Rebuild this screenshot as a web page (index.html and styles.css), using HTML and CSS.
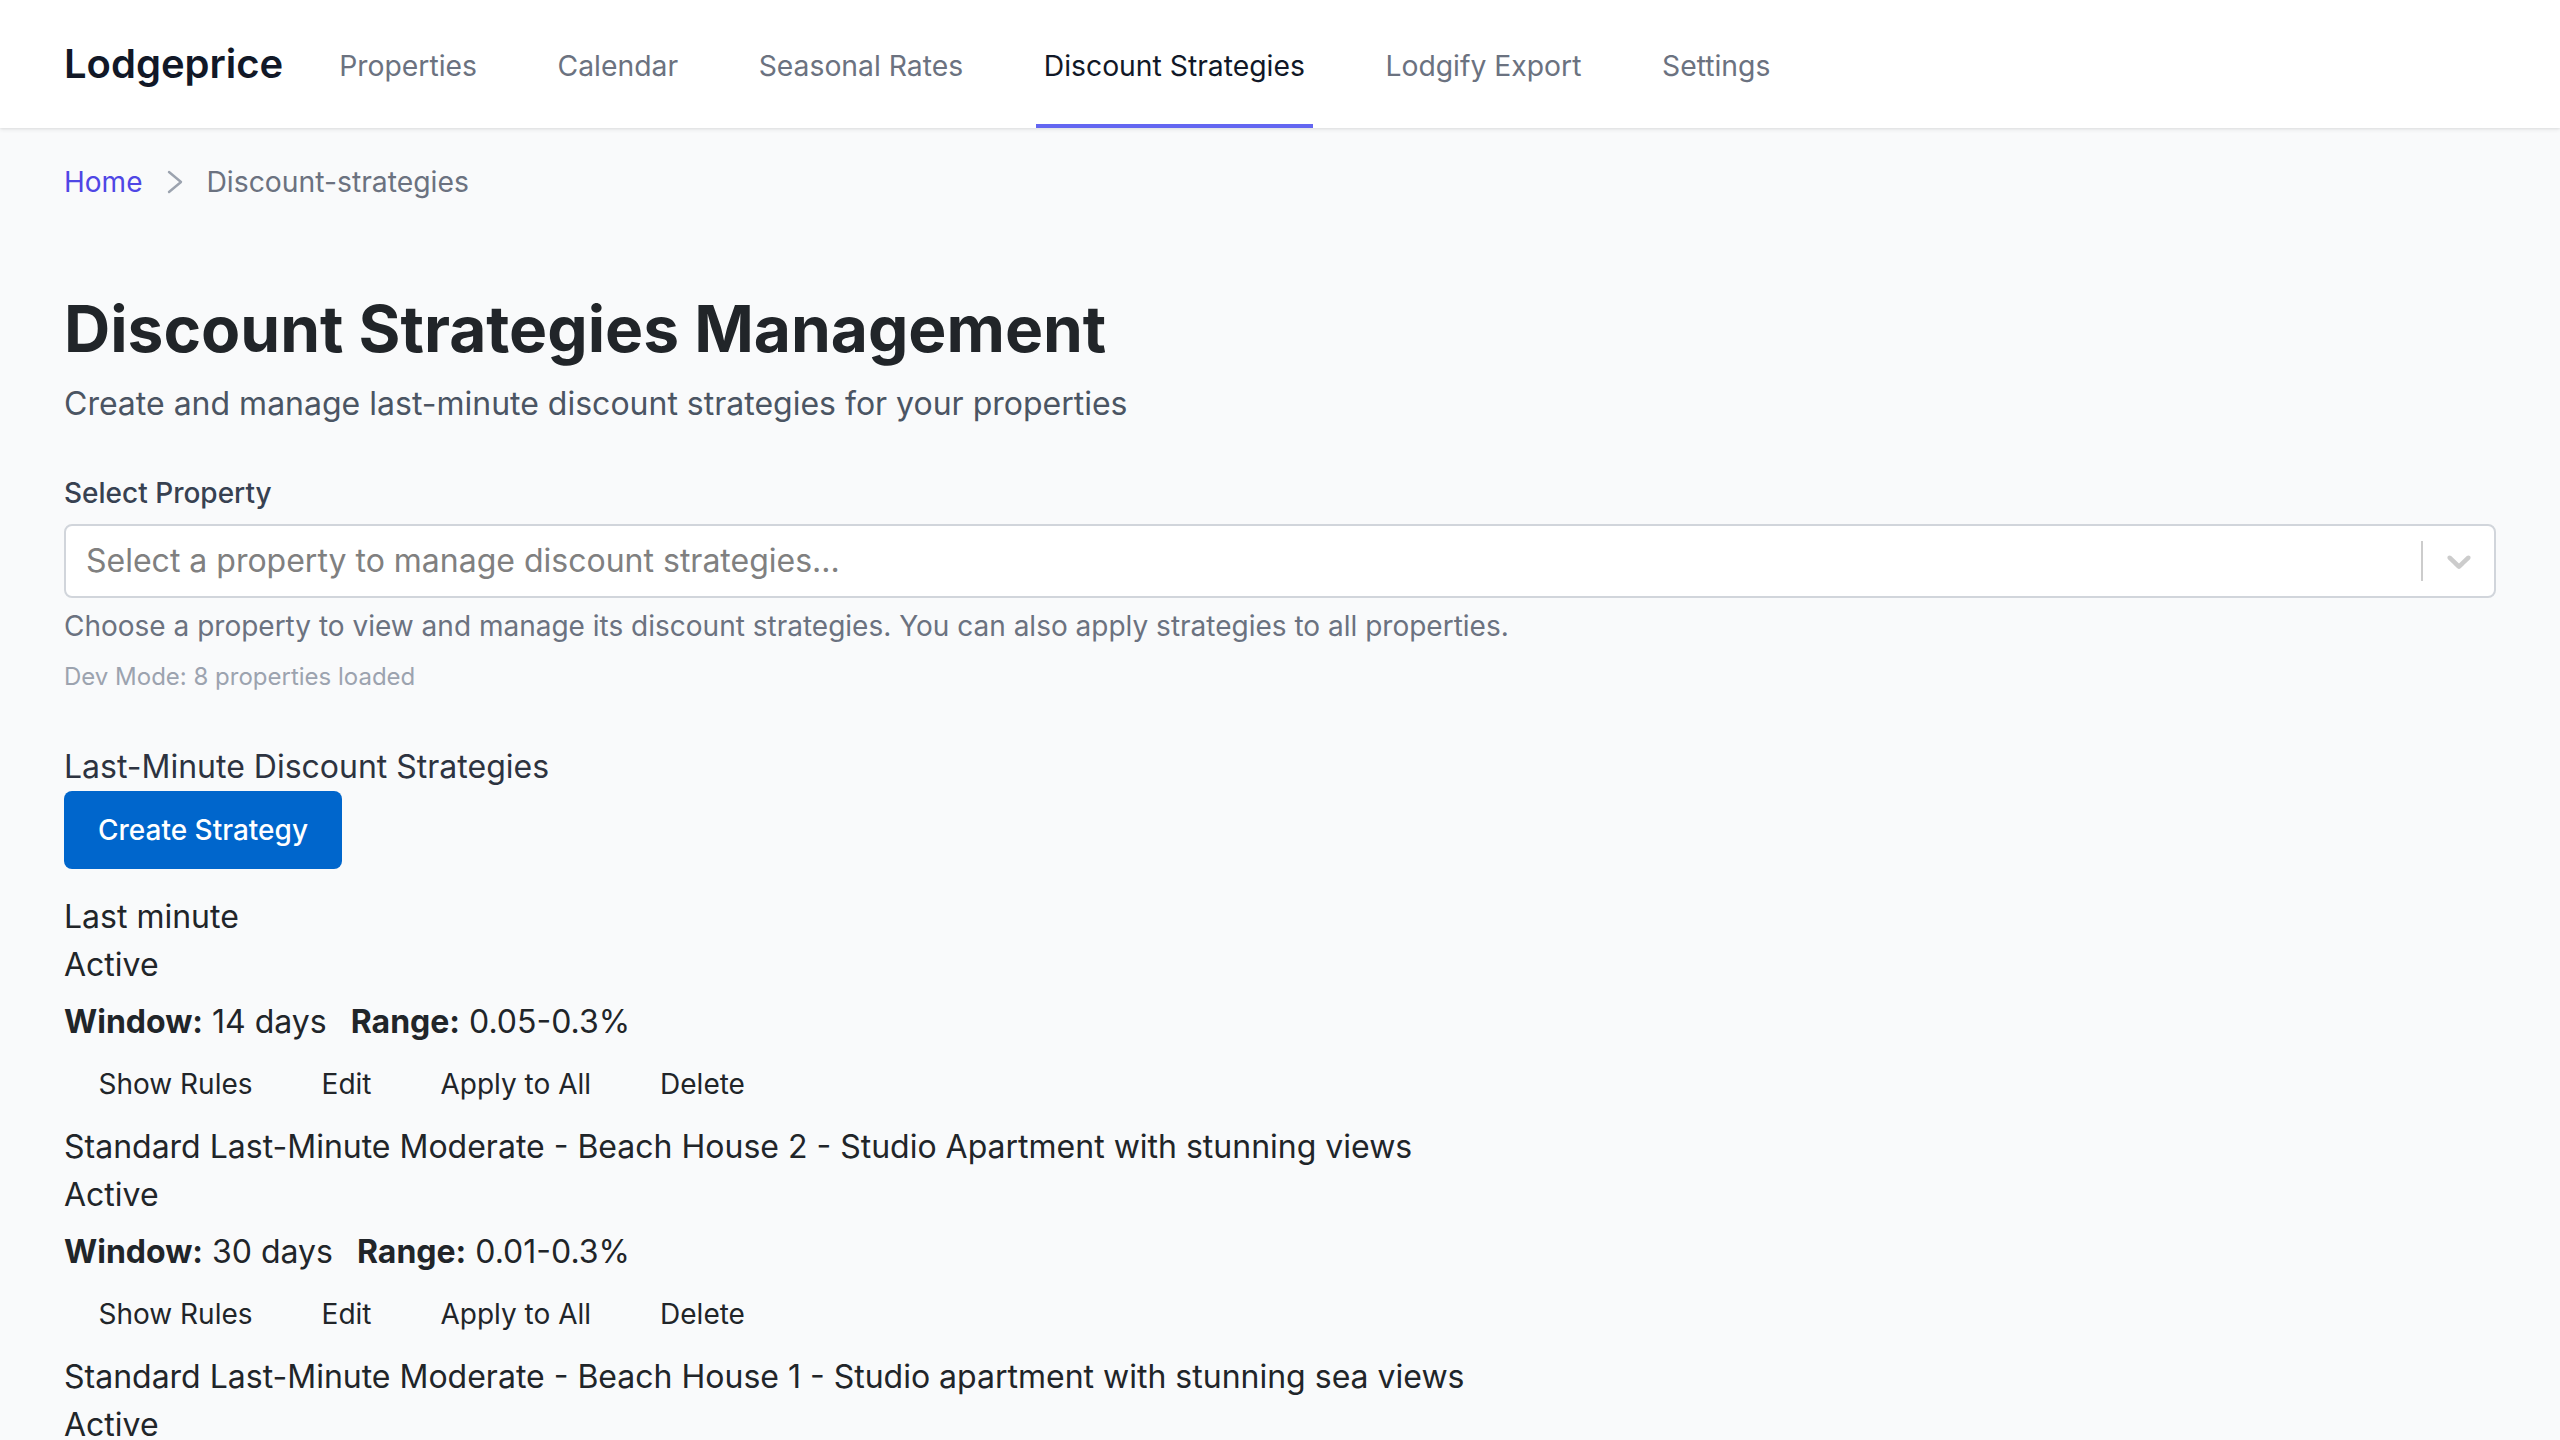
FILE: index.html
```html
<!DOCTYPE html>
<html lang="en">
<head>
<meta charset="utf-8">
<title>Lodgeprice - Discount Strategies</title>
<link rel="stylesheet" href="styles.css">
</head>
<body>
<header class="topbar">
  <div class="brand">Lodgeprice</div>
  <nav class="nav">
    <a class="nav-link" href="#">Properties</a>
    <a class="nav-link" href="#">Calendar</a>
    <a class="nav-link" href="#">Seasonal Rates</a>
    <a class="nav-link active" href="#">Discount Strategies</a>
    <a class="nav-link" href="#">Lodgify Export</a>
    <a class="nav-link" href="#">Settings</a>
  </nav>
</header>

<main class="main">
  <div class="breadcrumb">
    <a class="crumb-home" href="#">Home</a>
    <svg class="crumb-sep" width="18" height="24" viewBox="0 0 18 24" aria-hidden="true"><polyline points="3,2 15,12 3,22" fill="none" stroke="#9ca3af" stroke-width="2.4" stroke-linecap="round" stroke-linejoin="round"/></svg>
    <span class="crumb-current">Discount-strategies</span>
  </div>

  <h1 class="page-title">Discount Strategies Management</h1>
  <p class="page-sub">Create and manage last-minute discount strategies for your properties</p>

  <label class="field-label">Select Property</label>
  <div class="select">
    <div class="select-value">Select a property to manage discount strategies...</div>
    <span class="select-sep"></span>
    <div class="select-indicator">
      <svg width="40" height="40" viewBox="0 0 20 20" aria-hidden="true"><path fill="#cccccc" d="M4.516 7.548c0.436-0.446 1.043-0.481 1.576 0l3.908 3.747 3.908-3.747c0.533-0.481 1.141-0.446 1.574 0 0.436 0.445 0.408 1.197 0 1.615-0.406 0.418-4.695 4.502-4.695 4.502-0.217 0.223-0.502 0.335-0.787 0.335s-0.57-0.112-0.789-0.335c0 0-4.287-4.084-4.695-4.502s-0.436-1.170 0-1.615z"/></svg>
    </div>
  </div>
  <p class="help">Choose a property to view and manage its discount strategies. You can also apply strategies to all properties.</p>
  <p class="dev">Dev Mode: 8 properties loaded</p>

  <h2 class="section-title">Last-Minute Discount Strategies</h2>
  <button class="btn-primary" type="button">Create Strategy</button>

  <div class="strategies">
    <div class="strategy">
      <div class="s-name">Last minute</div>
      <div class="s-status">Active</div>
      <div class="s-meta"><span><strong>Window:</strong> 14 days</span><span><strong>Range:</strong> 0.05-0.3%</span></div>
      <div class="s-actions">
        <button class="btn-plain" type="button">Show Rules</button>
        <button class="btn-plain" type="button">Edit</button>
        <button class="btn-plain" type="button">Apply to All</button>
        <button class="btn-plain" type="button">Delete</button>
      </div>
    </div>
    <div class="strategy">
      <div class="s-name">Standard Last-Minute Moderate - Beach House 2 - Studio Apartment with stunning views</div>
      <div class="s-status">Active</div>
      <div class="s-meta"><span><strong>Window:</strong> 30 days</span><span><strong>Range:</strong> 0.01-0.3%</span></div>
      <div class="s-actions">
        <button class="btn-plain" type="button">Show Rules</button>
        <button class="btn-plain" type="button">Edit</button>
        <button class="btn-plain" type="button">Apply to All</button>
        <button class="btn-plain" type="button">Delete</button>
      </div>
    </div>
    <div class="strategy">
      <div class="s-name">Standard Last-Minute Moderate - Beach House 1 - Studio apartment with stunning sea views</div>
      <div class="s-status">Active</div>
      <div class="s-meta"><span><strong>Window:</strong> 30 days</span><span><strong>Range:</strong> 0.01-0.3%</span></div>
      <div class="s-actions">
        <button class="btn-plain" type="button">Show Rules</button>
        <button class="btn-plain" type="button">Edit</button>
        <button class="btn-plain" type="button">Apply to All</button>
        <button class="btn-plain" type="button">Delete</button>
      </div>
    </div>
  </div>
</main>
</body>
</html>
```
FILE: styles.css
```css
* { box-sizing: border-box; }
html, body { margin: 0; padding: 0; }
body {
  background: #f9fafb;
  font-family: Inter, "Noto Sans", "Liberation Sans", sans-serif;
  color: #212529;
}

/* ---------- top bar ---------- */
.topbar {
  height: 128px;
  background: #ffffff;
  display: flex;
  align-items: center;
  padding: 0 64px;
  box-shadow: 0 2px 4px rgba(0, 0, 0, 0.07), 0 1px 2px rgba(0, 0, 0, 0.05);
  position: relative;
  z-index: 1;
}
.brand {
  font-size: 40px;
  font-weight: 600;
  color: #111827;
  line-height: 56px;
}
.nav {
  display: flex;
  align-self: stretch;
  margin-left: 48px;
  gap: 64.6px;
}
.nav-link {
  display: flex;
  align-items: center;
  padding: 7px 8px 0;
  border-bottom: 4px solid transparent;
  font-size: 28.3px;
  color: #6b7280;
  text-decoration: none;
}
.nav-link.active {
  color: #111827;
  border-bottom-color: #6366f1;
}

/* ---------- main ---------- */
.main {
  padding: 34px 64px 64px;
}
.breadcrumb {
  display: flex;
  align-items: center;
  height: 40px;
  font-size: 28px;
}
.crumb-home {
  color: #4f46e5;
  text-decoration: none;
}
.crumb-sep {
  margin-left: 24px;
  display: block;
}
.crumb-current {
  margin-left: 22px;
  font-size: 28.3px;
  color: #6b7280;
}

.page-title {
  margin: 87px 0 0;
  font-size: 64px;
  line-height: 80px;
  font-weight: 700;
  color: #212529;
}
.page-sub {
  margin: 10.5px 0 0;
  font-size: 32px;
  line-height: 48px;
  color: #4b5563;
}

.field-label {
  display: block;
  margin-top: 45.5px;
  font-size: 28px;
  line-height: 40px;
  font-weight: 500;
  color: #374151;
}
.select {
  margin-top: 10.5px;
  height: 74px;
  background: #ffffff;
  border: 2px solid #d1d5db;
  border-radius: 8px;
  display: flex;
  align-items: center;
}
.select-value {
  flex: 1;
  padding-left: 20px;
  font-size: 32px;
  color: #808080;
  white-space: nowrap;
}
.select-sep {
  width: 2px;
  height: 40px;
  background: #cccccc;
}
.select-indicator {
  display: flex;
  align-items: center;
  padding: 0 15px 0 16px;
}
.select-indicator svg { display: block; }

.help {
  margin: 8px 0 0;
  font-size: 28px;
  line-height: 40px;
  color: #6b7280;
}
.dev {
  margin: 15px 0 0;
  font-size: 24px;
  line-height: 32px;
  color: #9ca3af;
}

.section-title {
  margin: 50px 0 0;
  font-size: 32px;
  line-height: 48px;
  font-weight: 400;
  color: #2d3340;
}
.btn-primary {
  display: block;
  height: 78px;
  padding: 0 34px;
  border: none;
  border-radius: 8px;
  background: #0066cc;
  color: #ffffff;
  font-family: inherit;
  font-size: 28px;
  font-weight: 500;
}

.strategies { margin-top: 24px; }
.strategy { display: flex; flex-direction: column; }
.s-name, .s-status {
  font-size: 32px;
  line-height: 48px;
  color: #212529;
}
.s-meta {
  margin-top: 9.5px;
  display: flex;
  gap: 24px;
  font-size: 32px;
  line-height: 48px;
  color: #212529;
}
.s-meta strong { font-weight: 700; }
.s-actions { display: flex; margin-top: -1.5px; }
.btn-plain {
  height: 78px;
  padding: 0 34.5px;
  border: none;
  background: transparent;
  color: #212529;
  font-family: inherit;
  font-size: 28px;
}
```
